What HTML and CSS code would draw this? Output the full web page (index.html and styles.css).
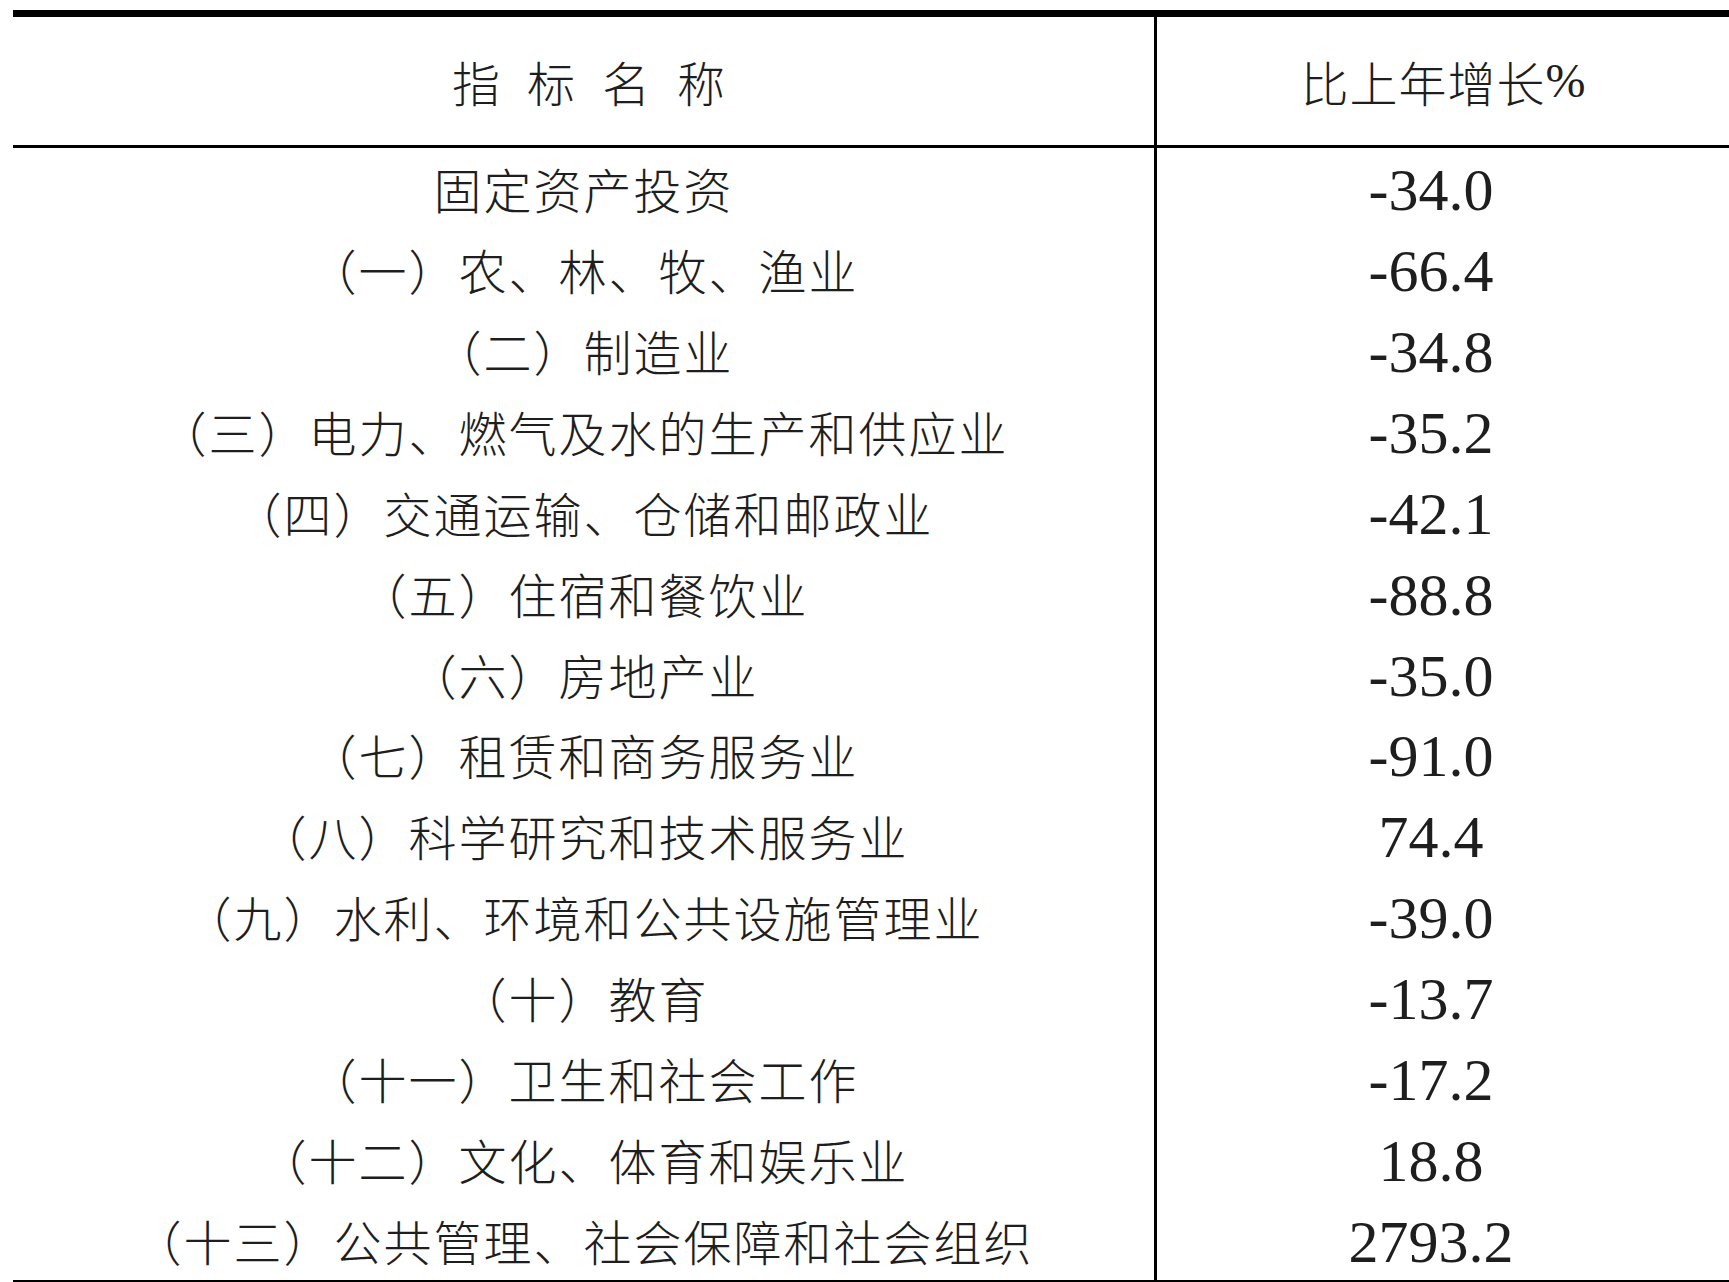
FILE: index.html
```html
<!DOCTYPE html>
<html lang="zh-CN">
<head>
<meta charset="utf-8">
<title>固定资产投资</title>
<link rel="stylesheet" href="styles.css">
</head>
<body>
<div class="table">
  <div class="cell head name"><span class="spaced">指标名称</span></div>
  <div class="cell head val">比上年增长<span class="pct">%</span></div>

  <div class="cell name">固定资产投资</div><div class="cell val num">-34.0</div>
  <div class="cell name">（一）农、林、牧、渔业</div><div class="cell val num">-66.4</div>
  <div class="cell name">（二）制造业</div><div class="cell val num">-34.8</div>
  <div class="cell name">（三）电力、燃气及水的生产和供应业</div><div class="cell val num">-35.2</div>
  <div class="cell name">（四）交通运输、仓储和邮政业</div><div class="cell val num">-42.1</div>
  <div class="cell name">（五）住宿和餐饮业</div><div class="cell val num">-88.8</div>
  <div class="cell name">（六）房地产业</div><div class="cell val num">-35.0</div>
  <div class="cell name">（七）租赁和商务服务业</div><div class="cell val num">-91.0</div>
  <div class="cell name">（八）科学研究和技术服务业</div><div class="cell val num">74.4</div>
  <div class="cell name">（九）水利、环境和公共设施管理业</div><div class="cell val num">-39.0</div>
  <div class="cell name">（十）教育</div><div class="cell val num">-13.7</div>
  <div class="cell name">（十一）卫生和社会工作</div><div class="cell val num">-17.2</div>
  <div class="cell name">（十二）文化、体育和娱乐业</div><div class="cell val num">18.8</div>
  <div class="cell name">（十三）公共管理、社会保障和社会组织</div><div class="cell val num">2793.2</div>
</div>
</body>
</html>
```
FILE: styles.css
```css
html, body {
  margin: 0;
  padding: 0;
  background: #ffffff;
}

body {
  width: 1729px;
  height: 1282px;
  overflow: hidden;
  font-family: "Noto Sans CJK SC", "Noto Sans", sans-serif;
  color: #1e1e1e;
}

.table {
  margin: 10px 0 0 13px;
  width: 1716px;
  display: grid;
  grid-template-columns: 1141px 1fr;
  grid-template-rows: 131px repeat(14, 80.86px);
  border-top: 7px solid #000;
  border-bottom: 4px solid #000;
}

.cell {
  display: flex;
  align-items: center;
  justify-content: center;
  font-size: 48px;
  font-weight: 300;
  letter-spacing: 2px;
  line-height: 1;
  white-space: nowrap;
}

.val {
  border-left: 3px solid #000;
}

.head {
  border-bottom: 3px solid #000;
  padding-top: 0;
}

.head.name {
  padding-left: 10px;
}

.head.val {
  letter-spacing: 1px;
}

.spaced {
  letter-spacing: 27px;
  margin-right: -27px;
}

.pct {
  font-family: "Liberation Serif", serif;
  font-size: 48px;
  letter-spacing: 0;
}

.num {
  font-family: "Liberation Serif", serif;
  font-size: 60px;
  font-weight: 400;
  letter-spacing: 0;
  padding-right: 24px;
  padding-top: 4px;
}
```
